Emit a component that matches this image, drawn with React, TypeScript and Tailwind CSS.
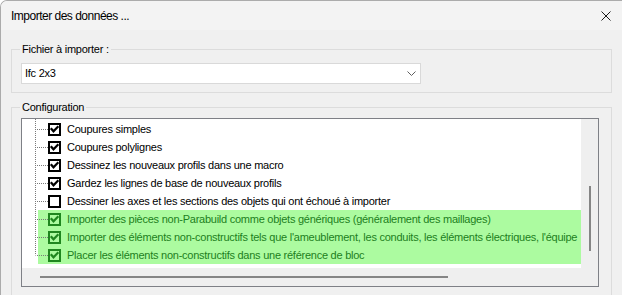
import React from "react";

type Row = { label: string; checked: boolean; green?: boolean };

const rows: Row[] = [
	{ label: "Coupures simples", checked: true },
	{ label: "Coupures polylignes", checked: true },
	{ label: "Dessinez les nouveaux profils dans une macro", checked: true },
	{ label: "Gardez les lignes de base de nouveaux profils", checked: true },
	{
		label: "Dessiner les axes et les sections des objets qui ont échoué à importer",
		checked: false,
	},
	{
		label:
			"Importer des pièces non-Parabuild comme objets génériques (généralement des maillages)",
		checked: true,
		green: true,
	},
	{
		label:
			"Importer des éléments non-constructifs tels que l'ameublement, les conduits, les éléments électriques, l'équipe",
		checked: true,
		green: true,
	},
	{
		label: "Placer les éléments non-constructifs dans une référence de bloc",
		checked: true,
		green: true,
	},
];

function CheckBox({ checked, green }: { checked: boolean; green?: boolean }) {
	const c = green ? "#1f861f" : "#000000";
	return (
		<svg width="13" height="13" viewBox="0 0 13 13" className="shrink-0">
			<rect
				x="1"
				y="1"
				width="11"
				height="11"
				fill={green ? "none" : "#ffffff"}
				stroke={c}
				strokeWidth="2"
			/>
			{checked && (
				<path
					d="M3.5 6 L5.5 8.3 L9.6 4"
					fill="none"
					stroke={c}
					strokeWidth="2.2"
					strokeLinecap="square"
				/>
			)}
		</svg>
	);
}

function TreeLines() {
	const centers = rows.map((_, i) => 10 + i * 18);
	const last = centers[centers.length - 1];
	return (
		<svg
			className="absolute left-0 top-0 pointer-events-none"
			width="40"
			height="150"
		>
			<line
				x1="13.5"
				y1="0"
				x2="13.5"
				y2={last + 0.5}
				stroke="#7a7a7a"
				strokeDasharray="1 1"
			/>
			{centers.map((y) => (
				<line
					key={y}
					x1="14"
					y1={y + 0.5}
					x2="26"
					y2={y + 0.5}
					stroke="#7a7a7a"
					strokeDasharray="1 1"
					strokeDashoffset="1"
				/>
			))}
		</svg>
	);
}

export default function App() {
	return (
		<div className="w-[622px] h-[295px] overflow-hidden bg-[#f0f0f0] border-l border-t border-[#ababab] rounded-tl-[7px] font-['Liberation_Sans',Arial,sans-serif] text-black">
			<div className="h-[29px] bg-[#f3f3f3] flex items-center justify-between pl-[10px] pr-[11px]">
				<span className="text-[12px] tracking-[-0.5px]">
					Importer des données ...
				</span>
				<svg width="10" height="10" viewBox="0 0 10 10">
					<path
						d="M0.5 0.5 L9.5 9.5 M9.5 0.5 L0.5 9.5"
						stroke="#1b1b1b"
						strokeWidth="1"
					/>
				</svg>
			</div>

			<fieldset className="mt-[12px] mx-[10px] border border-[#dcdcdc] px-0 pt-0 pb-[8px]">
				<legend className="ml-[8px] px-[2px] text-[11px] leading-[14px] tracking-[-0.25px]">
					Fichier à importer :
				</legend>
				<div className="ml-[9px] mt-[7px] w-[400px] h-[21px] bg-white border border-[#d9d9d9] flex items-center justify-between pl-[3px] pr-[4px]">
					<span className="text-[11px] tracking-[-0.25px]">Ifc 2x3</span>
					<svg width="9" height="5" viewBox="0 0 9 5">
						<path
							d="M0.5 0.5 L4.5 4.5 L8.5 0.5"
							fill="none"
							stroke="#5f5f5f"
							strokeWidth="1"
						/>
					</svg>
				</div>
			</fieldset>

			<fieldset className="mt-[7px] mx-[10px] border border-[#dcdcdc] px-0 pt-0 pb-[20px]">
				<legend className="ml-[8px] px-[2px] text-[11px] leading-[14px] tracking-[-0.25px]">
					Configuration
				</legend>
				<div className="ml-[9px] mt-[4px] w-[578px] border border-[#7e8086] bg-white flex flex-col">
					<div className="flex h-[149px]">
						<div className="relative flex-1 min-w-0 overflow-hidden pt-[1px]">
							{rows.map((r) => (
								<div key={r.label} className="flex h-[18px] pl-[16px]">
									<div
										className={`flex-1 min-w-0 flex items-center pl-[10px] ${r.green ? "bg-[#acfba0]" : ""}`}
									>
										<CheckBox checked={r.checked} green={r.green} />
										<span
											className={`ml-[6px] whitespace-nowrap text-[11px] tracking-[-0.25px] ${r.green ? "text-[#1d7f1d]" : "text-black"}`}
										>
											{r.label}
										</span>
									</div>
								</div>
							))}
							<TreeLines />
						</div>
						<div className="w-[17px] bg-[#efefef] pt-[67px]">
							<div className="ml-[8px] w-[2px] h-[65px] bg-[#858585]" />
						</div>
					</div>
					<div className="h-[18px] bg-[#efefef] pt-[8px]">
						<div className="ml-[18px] w-[408px] h-[2px] bg-[#858585]" />
					</div>
				</div>
			</fieldset>
		</div>
	);
}
